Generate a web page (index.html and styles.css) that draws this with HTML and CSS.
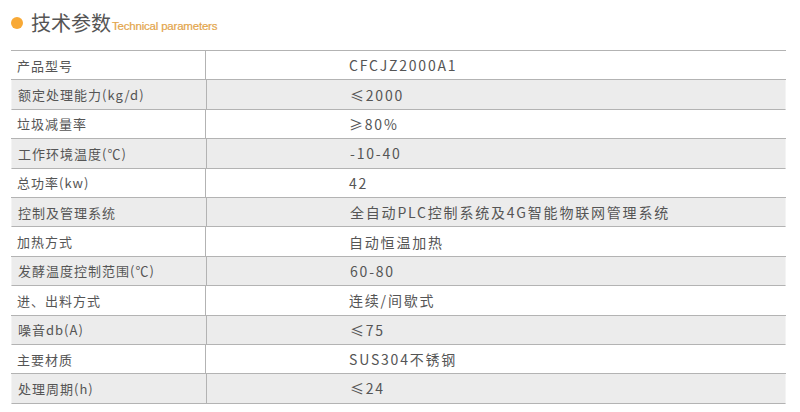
FILE: index.html
```html
<!DOCTYPE html>
<html lang="zh">
<head>
<meta charset="utf-8">
<link rel="stylesheet" href="styles.css">
</head>
<body>
<div class="page">
  <div class="heading">
    <span class="dot"></span>
    <span class="title">技术参数</span>
    <span class="sub">Technical parameters</span>
  </div>
  <div class="table">
    <div class="row"><div class="k">产品型号</div><div class="v">CFCJZ2000A1</div></div>
    <div class="row alt"><div class="k">额定处理能力(kg/d)</div><div class="v">≤2000</div></div>
    <div class="row"><div class="k">垃圾减量率</div><div class="v">≥80%</div></div>
    <div class="row alt"><div class="k">工作环境温度(℃)</div><div class="v">-10-40</div></div>
    <div class="row"><div class="k">总功率(kw)</div><div class="v">42</div></div>
    <div class="row alt"><div class="k">控制及管理系统</div><div class="v">全自动PLC控制系统及4G智能物联网管理系统</div></div>
    <div class="row"><div class="k">加热方式</div><div class="v">自动恒温加热</div></div>
    <div class="row alt"><div class="k">发酵温度控制范围(℃)</div><div class="v">60-80</div></div>
    <div class="row"><div class="k">进、出料方式</div><div class="v">连续/间歇式</div></div>
    <div class="row alt"><div class="k">噪音db(A)</div><div class="v">≤75</div></div>
    <div class="row"><div class="k">主要材质</div><div class="v">SUS304不锈钢</div></div>
    <div class="row alt"><div class="k">处理周期(h)</div><div class="v">≤24</div></div>
  </div>
</div>
</body>
</html>
```
FILE: styles.css
```css
* { box-sizing: border-box; }
html, body { margin: 0; padding: 0; background: #fff; }
body { font-family: "Noto Sans CJK SC", "Noto Sans", sans-serif; color: #555; }
.page { padding: 9px 14px 0 11px; }
.heading { display: flex; align-items: center; height: 28px; padding-left: 0; }
.dot { width: 12px; height: 12px; border-radius: 50%; background: #f8a936; margin: 0 8px 0 0; flex: none; }
.title { font-size: 20px; color: #555; letter-spacing: 0; line-height: 28px; }
.sub { font-family: "Liberation Sans", Arial, sans-serif; font-size: 11.5px; color: #e3a54a; margin-left: 1px; margin-top: 6px; letter-spacing: -0.2px; -webkit-text-stroke: 0.2px #e3a54a; }
.table { margin-top: 13px; border-top: 1px solid #b3b3b3; width: 775px; }
.row { display: flex; height: 29.4px; border-bottom: 1px solid #b3b3b3; align-items: stretch; }
.row.alt { background: #ececec; border-left: 1px solid #f4f4f4; border-right: 1px solid #f4f4f4; }
.k { width: 195px; border-right: 1px solid #b3b3b3; padding-left: 6px; font-size: 13px; letter-spacing: 1px; display: flex; align-items: center; color: #555; }
.v { padding-left: 143px; font-size: 14px; letter-spacing: 1.8px; display: flex; align-items: center; color: #555; }
```
